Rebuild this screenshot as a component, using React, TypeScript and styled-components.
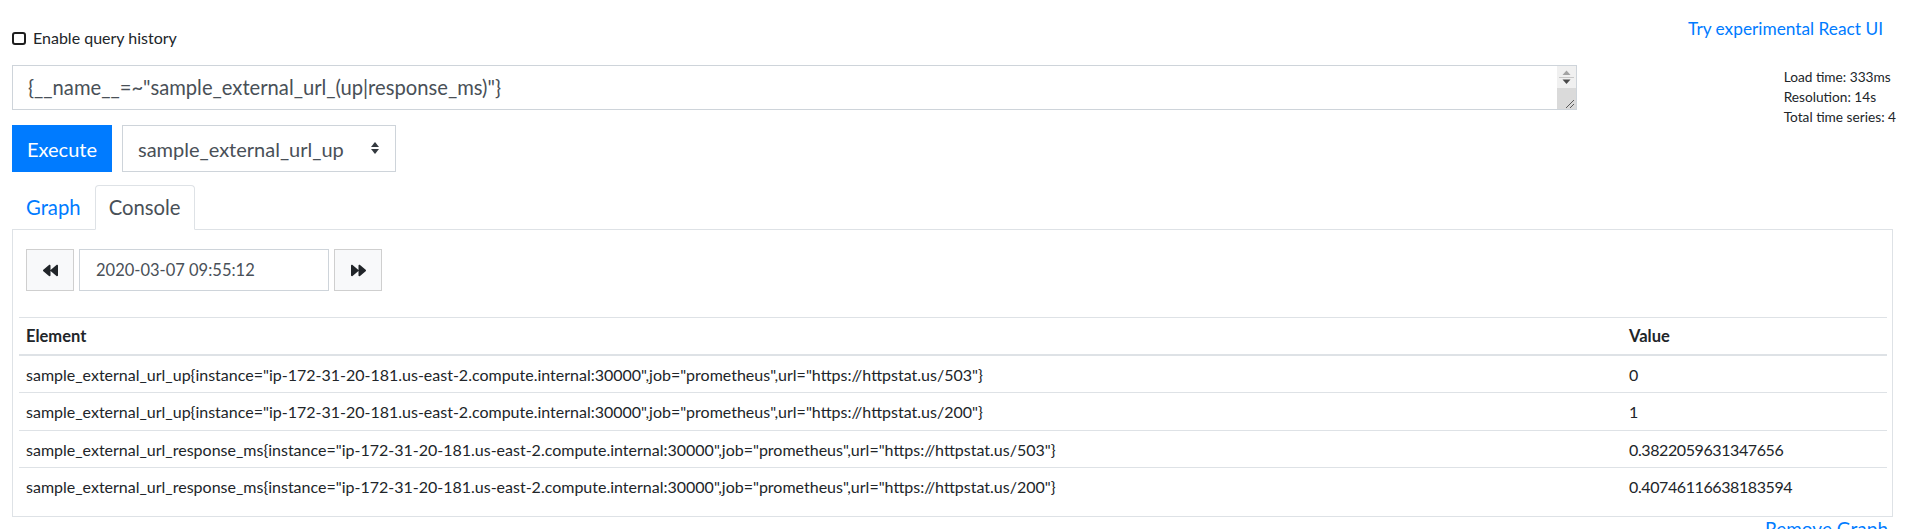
import React, { useState } from "react";
import styled, { createGlobalStyle } from "styled-components";
import { FaBackward, FaForward } from "react-icons/fa";

const GlobalStyle = createGlobalStyle`
    * {
        box-sizing: border-box;
    }
    html, body {
        margin: 0;
        padding: 0;
        background: #fff;
    }
    body {
        font-family: Lato, "Liberation Sans", sans-serif;
        font-size: 16px;
        line-height: 1.5;
        color: #212529;
    }
`;

const instance = "ip-172-31-20-181.us-east-2.compute.internal:30000";

const series = [
    { metric: "sample_external_url_up", code: "503", value: "0" },
    { metric: "sample_external_url_up", code: "200", value: "1" },
    { metric: "sample_external_url_response_ms", code: "503", value: "0.3822059631347656" },
    { metric: "sample_external_url_response_ms", code: "200", value: "0.40746116638183594" },
];

export default function App() {
    const [tab, setTab] = useState("console");
    const [history, setHistory] = useState(false);

    return (
        <Page>
            <GlobalStyle />
            <TopBar>
                <HistoryToggle>
                    <Checkbox type="checkbox" checked={history} onChange={() => setHistory(!history)} />
                    Enable query history
                </HistoryToggle>
                <ReactLink href="#">Try experimental React UI</ReactLink>
            </TopBar>

            <QueryRow>
                <QueryCol>
                    <ExpressionBox>
                        <Expression
                            rows={1}
                            defaultValue={'{__name__=~"sample_external_url_(up|response_ms)"}'}
                        />
                        <ScrollGutter>
                            <svg width="19" height="22" viewBox="0 0 19 22">
                                <polygon points="5.5,9 13.5,9 9.5,4.5" fill="#a3a3a3" />
                                <line x1="2" y1="11.5" x2="17" y2="11.5" stroke="#c8c8c8" />
                                <polygon points="5.5,13.5 13.5,13.5 9.5,18" fill="#4a4a4a" />
                            </svg>
                            <GripArea>
                                <svg width="19" height="21" viewBox="0 0 19 21">
                                    <line x1="9" y1="20" x2="17" y2="12" stroke="#5a5a5a" />
                                    <line x1="13" y1="20" x2="17" y2="16" stroke="#5a5a5a" />
                                </svg>
                            </GripArea>
                        </ScrollGutter>
                    </ExpressionBox>

                    <ControlsRow>
                        <ExecuteButton type="button">Execute</ExecuteButton>
                        <SelectWrap>
                            <MetricSelect defaultValue="sample_external_url_up">
                                <option>sample_external_url_up</option>
                                <option>sample_external_url_response_ms</option>
                            </MetricSelect>
                            <Caret width="10" height="14" viewBox="0 0 10 14">
                                <polygon points="1,6 9,6 5,1" fill="#343a40" />
                                <polygon points="1,8 9,8 5,13" fill="#343a40" />
                            </Caret>
                        </SelectWrap>
                    </ControlsRow>
                </QueryCol>

                <Stats>
                    <div>Load time: 333ms</div>
                    <div>Resolution: 14s</div>
                    <div>Total time series: 4</div>
                </Stats>
            </QueryRow>

            <Tabs>
                <Tab $active={tab === "graph"} onClick={() => setTab("graph")}>
                    Graph
                </Tab>
                <Tab $active={tab === "console"} onClick={() => setTab("console")}>
                    Console
                </Tab>
            </Tabs>

            <Panel>
                <TimeNav>
                    <NavButton type="button" aria-label="back">
                        <FaBackward size={15} />
                    </NavButton>
                    <DateInput defaultValue="2020-03-07 09:55:12" />
                    <NavButton type="button" aria-label="forward">
                        <FaForward size={15} />
                    </NavButton>
                </TimeNav>

                <Table>
                    <thead>
                        <tr>
                            <Th>Element</Th>
                            <Th $width={265}>Value</Th>
                        </tr>
                    </thead>
                    <tbody>
                        {series.map((s) => (
                            <tr key={s.metric + s.code}>
                                <Td>
                                    {s.metric}
                                    {`{instance="${instance}",job="prometheus",url="https://httpstat.us/${s.code}"}`}
                                </Td>
                                <ValueTd>{s.value}</ValueTd>
                            </tr>
                        ))}
                    </tbody>
                </Table>
            </Panel>

            <Footer>
                <FooterLink href="#">Remove Graph</FooterLink>
            </Footer>
        </Page>
    );
}

const Page = styled.div`
    padding: 0 12px;
`;

const TopBar = styled.div`
    display: flex;
    justify-content: space-between;
    align-items: flex-start;
    height: 65px;
    padding-top: 16px;
`;

const HistoryToggle = styled.label`
    display: flex;
    align-items: center;
    gap: 7px;
    margin-top: 10px;
    font-size: 16px;
    line-height: 24px;
    user-select: none;
`;

const Checkbox = styled.input`
    appearance: none;
    width: 14px;
    height: 13px;
    margin: 0;
    border: 2px solid #1e1e1e;
    border-radius: 3px;
    background: #fff;
`;

const ReactLink = styled.a`
    color: #007bff;
    text-decoration: none;
    font-size: 17.3px;
    line-height: 26px;
    margin-right: 10px;
`;

const QueryRow = styled.div`
    display: flex;
    align-items: flex-start;
`;

const QueryCol = styled.div`
    flex: 0 0 83.2%;
`;

const ExpressionBox = styled.div`
    position: relative;
    height: 45px;
`;

const Expression = styled.textarea`
    display: block;
    width: 100%;
    height: 45px;
    margin: 0;
    padding: 6px 36px 6px 15px;
    border: 1px solid #ced4da;
    border-radius: 0;
    font-family: inherit;
    font-size: 20.2px;
    line-height: 30px;
    color: #495057;
    resize: none;
    overflow: hidden;
    outline: none;
`;

const ScrollGutter = styled.div`
    position: absolute;
    top: 1px;
    right: 1px;
    bottom: 1px;
    width: 19px;
    display: flex;
    flex-direction: column;
    background: #f0f0f0;

    svg {
        display: block;
    }
`;

const GripArea = styled.div`
    flex: 1;
    display: flex;
    align-items: flex-end;
    background: #dadada;
`;

const ControlsRow = styled.div`
    display: flex;
    gap: 10px;
    margin-top: 15px;
`;

const ExecuteButton = styled.button`
    width: 100px;
    height: 47px;
    padding: 0;
    border: 1px solid #007bff;
    border-radius: 0;
    background: #007bff;
    color: #fff;
    font-family: inherit;
    font-size: 20px;
    line-height: 30px;
    cursor: pointer;
`;

const SelectWrap = styled.div`
    position: relative;
    width: 274px;
    height: 47px;
`;

const MetricSelect = styled.select`
    appearance: none;
    width: 100%;
    height: 100%;
    padding: 0 40px 0 15px;
    border: 1px solid #ced4da;
    border-radius: 0;
    background: #fff;
    color: #495057;
    font-family: inherit;
    font-size: 20px;
    outline: none;
`;

const Caret = styled.svg`
    position: absolute;
    right: 16px;
    top: 16px;
    pointer-events: none;
`;

const Stats = styled.div`
    margin-left: auto;
    margin-right: -3px;
    margin-top: 2px;
    font-size: 13.7px;
    line-height: 20px;
`;

const Tabs = styled.div`
    display: flex;
    margin-top: 13px;
    border-bottom: 1px solid #dee2e6;
`;

const Tab = styled.div<{ $active: boolean }>`
    padding: 6px 13px 7px;
    margin-bottom: -1px;
    border: 1px solid transparent;
    border-color: ${(p) => (p.$active ? "#dee2e6 #dee2e6 #fff" : "transparent")};
    border-radius: 4px 4px 0 0;
    background: ${(p) => (p.$active ? "#fff" : "transparent")};
    color: ${(p) => (p.$active ? "#495057" : "#007bff")};
    font-size: 20.3px;
    line-height: 30px;
    cursor: pointer;
`;

const Panel = styled.div`
    padding: 19px 5px 11px 6px;
    border: 1px solid #dee2e6;
    border-top: none;
`;

const TimeNav = styled.div`
    display: flex;
    align-items: center;
    gap: 5px;
    margin-left: 7px;
`;

const NavButton = styled.button`
    display: flex;
    align-items: center;
    justify-content: center;
    width: 48px;
    height: 42px;
    padding: 0;
    border: 1px solid #cfcfcf;
    border-radius: 0;
    background: #f8f9fa;
    color: #212529;
    cursor: pointer;
`;

const DateInput = styled.input`
    width: 250px;
    height: 42px;
    padding: 0 16px;
    border: 1px solid #ced4da;
    border-radius: 0;
    font-family: inherit;
    font-size: 16.5px;
    color: #495057;
    outline: none;
`;

const Table = styled.table`
    width: 100%;
    margin-top: 26px;
    border-collapse: collapse;
    font-size: 16px;
    line-height: 25px;
`;

const Th = styled.th<{ $width?: number }>`
    width: ${(p) => (p.$width ? p.$width + "px" : "auto")};
    padding: 5.5px 7px 5px;
    border-top: 1px solid #dee2e6;
    border-bottom: 2px solid #dee2e6;
    text-align: left;
    font-size: 16.5px;
    font-weight: 700;
`;

const Td = styled.td`
    padding: 6px 7px 5.5px;
    border-top: 1px solid #dee2e6;
`;

const ValueTd = styled(Td)`
    letter-spacing: -0.4px;
`;

const Footer = styled.div`
    display: flex;
    justify-content: flex-end;
    padding-right: 5px;
`;

const FooterLink = styled.a`
    color: #007bff;
    text-decoration: none;
    font-size: 19px;
    line-height: 24px;
`;
